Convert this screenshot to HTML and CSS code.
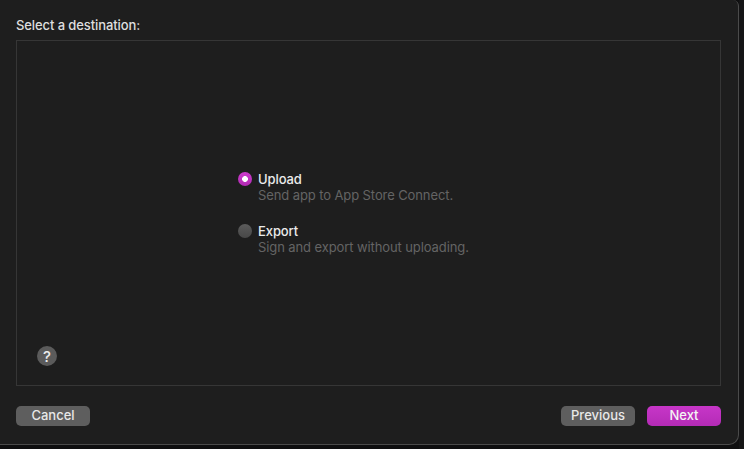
FILE: index.html
```html
<!DOCTYPE html>
<html>
<head>
<meta charset="utf-8">
<link rel="stylesheet" href="styles.css">
</head>
<body>
<div class="screen">
  <div class="sheet">
    <div class="title">Select a destination:</div>
    <div class="box">
      <div class="spacer"></div>
      <div class="options">
        <div class="option">
          <span class="radio on"></span>
          <div class="texts">
            <div class="label">Upload</div>
            <div class="sub">Send app to App Store Connect.</div>
          </div>
        </div>
        <div class="option">
          <span class="radio"></span>
          <div class="texts">
            <div class="label">Export</div>
            <div class="sub">Sign and export without uploading.</div>
          </div>
        </div>
      </div>
      <div class="helpcell"><span class="help">?</span></div>
    </div>
    <div class="buttons">
      <button class="btn">Cancel</button>
      <div class="right">
        <button class="btn">Previous</button>
        <button class="btn primary">Next</button>
      </div>
    </div>
  </div>
  <div class="behind"></div>
</div>
</body>
</html>
```
FILE: styles.css
```css
html, body {
  margin: 0;
  padding: 0;
  background: #0f0f10;
  font-family: Inter, "Liberation Sans", sans-serif;
  font-size: 13px;
}
.screen {
  display: flex;
  width: 744px;
  height: 449px;
  overflow: hidden;
}
.sheet {
  box-sizing: border-box;
  width: 739px;
  height: 445px;
  flex: none;
  background: #1e1e1e;
  border-right: 1px solid #4b4b4b;
  border-bottom: 1px solid #4b4b4b;
  border-bottom-right-radius: 10px;
  border-top-right-radius: 6px;
  padding: 17px 17px 0 16px;
  display: flex;
  flex-direction: column;
}
.behind {
  flex: 1;
  background: #151516;
}
.title {
  color: #dedede;
  font-weight: 500;
  line-height: 16px;
  margin-bottom: 7px;
  letter-spacing: -0.1px;
}
.box {
  box-sizing: border-box;
  width: 705px;
  height: 346px;
  border: 1px solid #363636;
  display: grid;
  grid-template-rows: 1fr auto 1fr;
}
.options {
  padding-left: 221px;
  display: flex;
  flex-direction: column;
  gap: 20px;
}
.option {
  display: flex;
  gap: 6px;
}
.radio {
  width: 14px;
  height: 14px;
  margin-top: 1px;
  border-radius: 50%;
  background: linear-gradient(#5c5c5c, #484848);
  box-sizing: border-box;
  flex: none;
}
.radio.on {
  background: radial-gradient(circle, #ffffff 0 2.6px, transparent 3.2px), linear-gradient(#cc3ccc, #b22ab4);
}
.label {
  color: #ebebeb;
  font-weight: 500;
  line-height: 16px;
  letter-spacing: -0.1px;
}
.sub {
  color: #646464;
  line-height: 16px;
  letter-spacing: -0.1px;
}
.helpcell {
  align-self: end;
  padding: 0 0 19px 20px;
}
.help {
  display: flex;
  width: 20px;
  height: 20px;
  border-radius: 50%;
  background: #5b5b5b;
  color: #ececec;
  font-size: 15px;
  font-weight: 500;
  align-items: center;
  justify-content: center;
  line-height: 1;
}
.buttons {
  display: flex;
  justify-content: space-between;
  margin-top: 20px;
}
.right {
  display: flex;
  gap: 12px;
}
.btn {
  width: 74px;
  height: 20px;
  border: none;
  border-radius: 5px;
  background: #5e5e5e;
  color: #e8e8e8;
  font-family: Inter, "Liberation Sans", sans-serif;
  font-size: 13px;
  font-weight: 500;
  padding: 0 0 1px;
  line-height: 19px;
}
.btn.primary {
  background: linear-gradient(#c736c8, #b42bb6);
  color: #f4f4f4;
}
```
